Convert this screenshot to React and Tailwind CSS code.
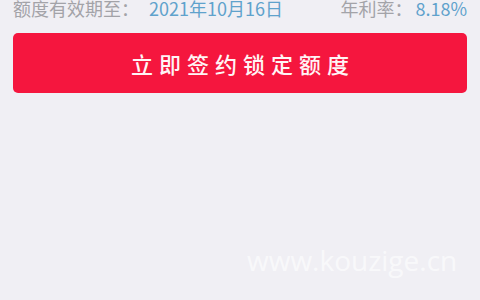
export default function App() {
  const cjk = { fontFamily: '"Noto Sans CJK SC", "Noto Sans", sans-serif' };
  return (
    <div className="relative w-[480px] h-[300px] overflow-hidden bg-[#f0eff4]" style={cjk}>
      <div className="flex items-center justify-between px-[13px] h-[18px] text-[18px] leading-[18px] mt-[-1px]">
        <div className="flex">
          <span className="text-[#a3a3a8]">额度有效期至：</span>
          <span className="ml-[10px] text-[#5fa2cc]">2021年10月16日</span>
        </div>
        <div className="flex">
          <span className="text-[#a3a3a8]">年利率：</span>
          <span className="ml-[3px] text-[#5fa2cc]">8.18%</span>
        </div>
      </div>
      <div className="px-[13px] mt-[16px]">
        <button className="w-full h-[60px] rounded-[5px] bg-[#f5163e] text-[#fff4f5] text-[22px] font-medium tracking-[6px] pl-[6px] flex items-center justify-center">
          立即签约锁定额度
        </button>
      </div>
      <div
        className="absolute left-[247px] top-[242px] text-[28px] leading-[36px] text-white/60"
        style={{ fontFamily: '"Open Sans", "Noto Sans", sans-serif' }}
      >
        www.kouzige.cn
      </div>
    </div>
  );
}
